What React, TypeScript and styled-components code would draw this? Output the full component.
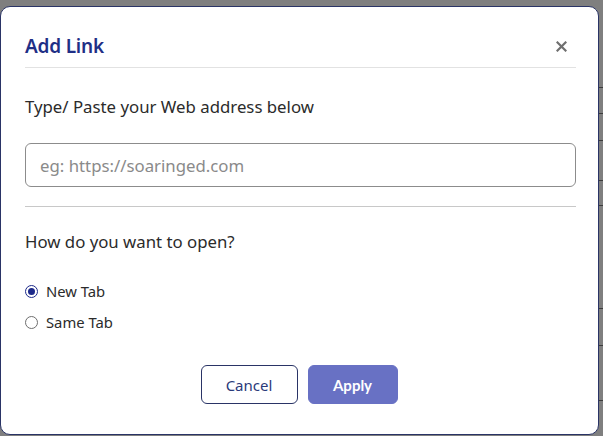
import React, { useState } from "react";
import styled, { createGlobalStyle } from "styled-components";

const Global = createGlobalStyle`
  html, body { margin: 0; padding: 0; }
  body {
    background: #7f7f7f;
    font-family: "Noto Sans", "Open Sans", sans-serif;
    width: 603px;
    height: 436px;
    overflow: hidden;
  }
  * { box-sizing: border-box; }
`;

const Backdrop = styled.div`
  position: relative;
  width: 603px;
  height: 436px;
  padding-top: 6px;
`;

const BehindLines = styled.div`
  position: absolute;
  right: 0;
  top: 0;
  width: 5px;
  height: 436px;
`;

const BehindLine = styled.div<{ $top: number }>`
  position: absolute;
  left: 0;
  right: 0;
  top: ${(p) => p.$top}px;
  height: 1px;
  background: #3c3c3c;
`;

const Modal = styled.div`
  position: relative;
  width: 599px;
  height: 429px;
  background: #fff;
  border: 1.5px solid #2a3466;
  border-radius: 10px;
  padding: 0 22px 0 24px;
  display: flex;
  flex-direction: column;
`;

const Header = styled.div`
  height: 61px;
  display: flex;
  align-items: center;
  justify-content: space-between;
  border-bottom: 1px solid #e2e2e2;
  padding-top: 20px;
  padding-bottom: 2px;
`;

const Title = styled.h2`
  margin: 0;
  font-size: 19px;
  font-weight: 600;
  color: #1f2f86;
  letter-spacing: -0.2px;
`;

const Close = styled.button`
  border: none;
  background: none;
  padding: 0;
  margin-right: 9px;
  width: 12px;
  height: 12px;
  display: flex;
  align-items: center;
  justify-content: center;
  cursor: pointer;
`;

const Label = styled.div<{ $mt: number }>`
  margin-top: ${(p) => p.$mt}px;
  font-size: 16.8px;
  color: #2b2b2b;
  line-height: 22px;
`;

const Input = styled.input`
  margin-top: 25px;
  width: 100%;
  height: 44px;
  border: 1px solid #8c8c8c;
  border-radius: 6px;
  padding: 0 14px;
  font-family: inherit;
  font-size: 16.8px;
  color: #333;
  outline: none;
  &::placeholder { color: #8a8a8a; }
`;

const Divider = styled.div`
  margin-top: 19px;
  height: 1px;
  background: #c8c8c8;
`;

const RadioGroup = styled.div`
  margin-top: 27px;
  display: flex;
  flex-direction: column;
  gap: 9px;
`;

const RadioRow = styled.label`
  display: flex;
  align-items: center;
  gap: 8px;
  font-size: 14.8px;
  color: #2b2b2b;
  height: 22px;
  cursor: pointer;
`;

const RadioCircle = styled.span<{ $on: boolean }>`
  width: 13px;
  height: 13px;
  border-radius: 50%;
  border: 1px solid ${(p) => (p.$on ? "#1d2a8a" : "#6e6e6e")};
  display: flex;
  align-items: center;
  justify-content: center;
  &::after {
    content: "";
    width: 7px;
    height: 7px;
    border-radius: 50%;
    background: ${(p) => (p.$on ? "#1d2a8a" : "transparent")};
  }
`;

const Actions = styled.div`
  margin-top: 32px;
  display: flex;
  justify-content: center;
  gap: 10px;
  padding-right: 3px;
`;

const Button = styled.button<{ $primary?: boolean }>`
  height: 39px;
  width: ${(p) => (p.$primary ? 90 : 97)}px;
  border-radius: 6px;
  font-family: ${(p) => (p.$primary ? '"Lato", sans-serif' : '"Noto Sans", sans-serif')};
  font-size: 15px;
  font-weight: ${(p) => (p.$primary ? 700 : 400)};
  border: 1px solid ${(p) => (p.$primary ? "#6871c4" : "#2a3466")};
  background: ${(p) => (p.$primary ? "#6871c4" : "#fff")};
  color: ${(p) => (p.$primary ? "#fff" : "#2b3a7a")};
  cursor: pointer;
`;

export default function App() {
  const [mode, setMode] = useState<"new" | "same">("new");
  return (
    <>
      <Global />
      <Backdrop>
        <BehindLines>
          {[87, 113, 140, 180, 205, 308, 345, 400].map((t) => (
            <BehindLine key={t} $top={t} />
          ))}
        </BehindLines>
        <Modal>
          <Header>
            <Title>Add Link</Title>
            <Close aria-label="Close">
              <svg width="11" height="11" viewBox="0 0 11 11">
                <path d="M1.5 1.5 L9.5 9.5 M9.5 1.5 L1.5 9.5" stroke="#6f6f6f" strokeWidth="2.2" strokeLinecap="square" />
              </svg>
            </Close>
          </Header>
          <Label $mt={28}>Type/ Paste your Web address below</Label>
          <Input placeholder="eg: https://soaringed.com" />
          <Divider />
          <Label $mt={24}>How do you want to open?</Label>
          <RadioGroup>
            <RadioRow onClick={() => setMode("new")}>
              <RadioCircle $on={mode === "new"} />
              New Tab
            </RadioRow>
            <RadioRow onClick={() => setMode("same")}>
              <RadioCircle $on={mode === "same"} />
              Same Tab
            </RadioRow>
          </RadioGroup>
          <Actions>
            <Button>Cancel</Button>
            <Button $primary>Apply</Button>
          </Actions>
        </Modal>
      </Backdrop>
    </>
  );
}
